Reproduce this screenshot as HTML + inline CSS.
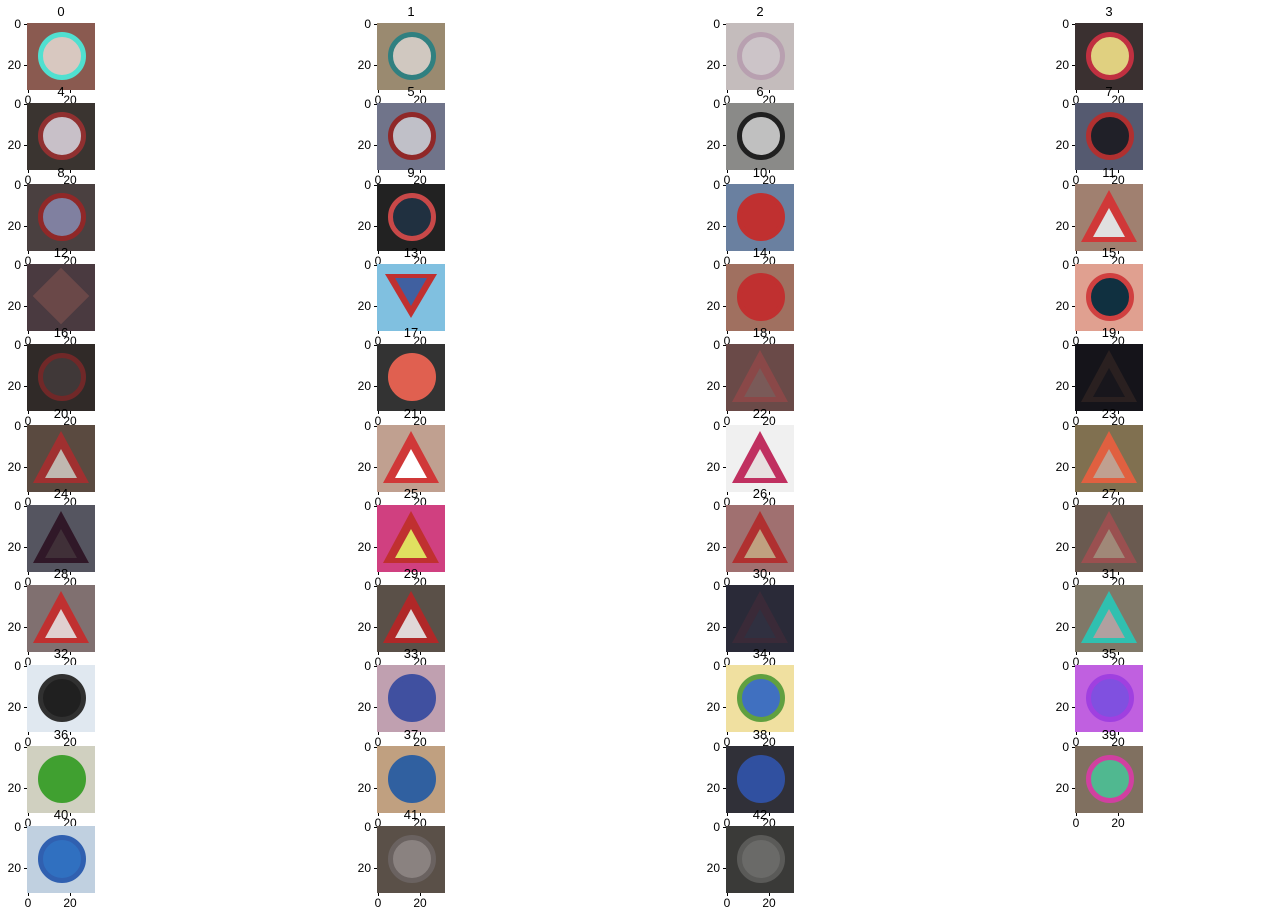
<!DOCTYPE html>
<html><head><meta charset="utf-8"><style>
body{margin:0;width:1269px;height:917px;background:#fff;position:relative;overflow:hidden;font-family:"Liberation Sans","DejaVu Sans",sans-serif;font-size:12px;color:#000}
.i{position:absolute;width:68px;height:67px;overflow:hidden}
.c{position:absolute;left:11px;top:9px;width:38px;height:38px;border-radius:50%;border:5px solid #b03030}
.t{position:absolute;left:6px;top:6px;width:56px;height:52px;clip-path:polygon(50% 0,100% 100%,0 100%)}
.t i{position:absolute;left:12px;top:18px;width:32px;height:29px;clip-path:polygon(50% 0,100% 100%,0 100%)}
.v{position:absolute;left:8px;top:10px;width:52px;height:44px;clip-path:polygon(0 0,100% 0,50% 100%)}
.d{position:absolute;left:14px;top:12px;width:40px;height:40px;transform:rotate(45deg)}
.ti{position:absolute;width:68px;text-align:center;font-size:13px}
.yl{position:absolute;width:24px;text-align:right}
.xl{position:absolute;width:24px;text-align:center}
.tk{position:absolute;background:#000}
</style></head><body>
<div id="g"></div>
<script>
var L=[27,377,726,1075];
var S=[
["#8a5a50","c","#d8c8c0","#50e0d0"],["#9a8a70","c","#d0c8c0","#308080"],["#c4bcbc","c","#ccc4c8","#b8a0b0"],["#3a3030","c","#e0d080","#c03040"],
["#3a3430","c","#c8c0c8","#903030"],["#70748a","c","#c0c0c8","#902828"],["#8a8a88","c","#c0c0c0","#202020"],["#555a70","c","#202028","#b03030"],
["#4a4040","c","#8080a0","#902828"],["#222","c","#203040","#c84848"],["#6a80a0","c","#c03030","#c03030"],["#a08070","t","#e0e0e0","#d03838"],
["#4a3a40","d","#5a3a38","#6a4848"],["#80c0e0","v","#4060a0","#c03030"],["#a07060","c","#c03030","#c03030"],["#e0a090","c","#103040","#d04040"],
["#302a28","c","#403838","#702828"],["#333","c","#e06050","#e06050"],["#6a4a48","t","#7a5a58","#8a4848"],["#15141a","t","#18161c","#2a2020"],
["#5a4a40","t","#c0b8b0","#a03030"],["#c0a090","t","#ffffff","#d03838"],["#f0f0f0","t","#e8e0e0","#c03060"],["#807050","t","#c0a090","#e06040"],
["#555560","t","#403038","#301828"],["#d04080","t","#e0e060","#c03030"],["#a07070","t","#c0a080","#b03030"],["#6a5a50","t","#a08878","#9a5050"],
["#807070","t","#e0d0d0","#c03030"],["#5a5048","t","#e0d8d8","#b02828"],["#2a2a38","t","#303040","#3a2a38"],["#807868","t","#b0a0a0","#30c0b0"],
["#e0e8f0","c","#202020","#303030"],["#c0a0b0","c","#4050a0","#4050a0"],["#f0e0a0","c","#4070c0","#60a040"],["#c060e0","c","#8050e0","#a040e0"],
["#d0d0c0","c","#40a030","#40a030"],["#c0a080","c","#3060a0","#3060a0"],["#303038","c","#3050a0","#3050a0"],["#807060","c","#50b890","#d040a0"],
["#c0d0e0","c","#3070c0","#3060b0"],["#5a5048","c","#8a8280","#6a6260"],["#3a3a38","c","#6a6a68","#5a5a58"]];
var h="";
for(var k=0;k<43;k++){var r=Math.floor(k/4),c=k%4,x=L[c],y=Math.round(23+80.3*r),s=S[k];
var inner="";
if(s[1]=="c")inner='<div class="c" style="background:'+s[2]+';border-color:'+s[3]+'"></div>';
else if(s[1]=="t")inner='<div class="t" style="background:'+s[3]+'"><i style="background:'+s[2]+'"></i></div>';
else if(s[1]=="v")inner='<div class="v" style="background:'+s[3]+'"></div><div class="v" style="left:18px;top:14px;width:32px;height:28px;background:'+s[2]+'"></div>';
else inner='<div class="d" style="background:'+s[3]+'"></div>';
h+='<div class="i" style="left:'+x+'px;top:'+y+'px;background:'+s[0]+'">'+inner+'</div>';
h+='<div class="ti" style="left:'+x+'px;top:'+(y-19)+'px">'+k+'</div>';
h+='<div class="yl" style="left:'+(x-30)+'px;top:'+(y-6)+'px">0</div>';
h+='<div class="yl" style="left:'+(x-30)+'px;top:'+(y+35)+'px">20</div>';
h+='<div class="tk" style="left:'+(x-3)+'px;top:'+(y+1)+'px;width:3px;height:1px"></div>';
h+='<div class="tk" style="left:'+(x-3)+'px;top:'+(y+42)+'px;width:3px;height:1px"></div>';
h+='<div class="tk" style="left:'+(x+1)+'px;top:'+(y+67)+'px;width:1px;height:3px"></div>';
h+='<div class="tk" style="left:'+(x+43)+'px;top:'+(y+67)+'px;width:1px;height:3px"></div>';
h+='<div class="xl" style="left:'+(x-11)+'px;top:'+(y+70)+'px">0</div>';
h+='<div class="xl" style="left:'+(x+31)+'px;top:'+(y+70)+'px">20</div>';}
document.getElementById("g").innerHTML=h;
</script>
</body></html>
